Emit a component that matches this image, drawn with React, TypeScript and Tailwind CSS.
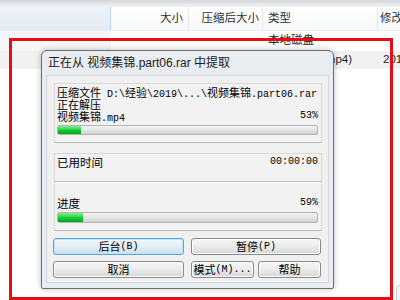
import React from "react";

const CJK = "font-['Noto_Sans_CJK_SC',sans-serif] text-[11px]";
const MONO = "font-['Liberation_Mono',monospace] text-[10px]";

function Mixed({ text }: { text: string }) {
  const parts = text.match(/[\u3000-\u9fff\uff00-\uffef]+|[^\u3000-\u9fff\uff00-\uffef]+/g) || [];
  return (
    <>
      {parts.map((p, i) =>
        /[\u3000-\u9fff\uff00-\uffef]/.test(p) ? (
          <span key={i} className={CJK}>
            {p}
          </span>
        ) : (
          <span key={i} className={MONO + " whitespace-pre"}>
            {p}
          </span>
        )
      )}
    </>
  );
}

function Bar({ fill, h }: { fill: number; h: string }) {
  return (
    <div
      className={
        "w-full rounded-[2px] border border-[#b4b4b4] bg-linear-to-b from-[#f4f4f4] via-[#e4e4e4] to-[#d2d2d2] overflow-hidden flex " +
        h
      }
    >
      <div
        className="h-full bg-linear-to-b from-[#7ef08f] via-[#0fcf33] to-[#06a422]"
        style={{ width: fill }}
      />
    </div>
  );
}

function Btn({
  label,
  w,
  primary,
}: {
  label: string;
  w: string;
  primary?: boolean;
}) {
  return (
    <div
      className={
        "h-[17px] shrink-0 rounded-[3px] border flex items-center justify-center leading-none text-black whitespace-nowrap overflow-visible " +
        w +
        (primary
          ? " border-[#5aa3d6] bg-linear-to-b from-[#f1f7fc] via-[#e3eef7] to-[#cfe0ee] shadow-[inset_0_0_0_1px_#bfe3fa]"
          : " border-[#8a8a8a] bg-linear-to-b from-[#f6f6f6] via-[#ebebeb] to-[#d6d6d6] shadow-[inset_0_0_0_1px_#fbfbfb]")
      }
    >
      <Mixed text={label} />
    </div>
  );
}

export default function App() {
  return (
    <div className="relative w-[400px] h-[300px] overflow-hidden bg-white font-['Liberation_Sans','Noto_Sans_CJK_SC',sans-serif]">
      {/* top strip */}
      <div className="h-[7px] bg-linear-to-b from-[#d3d6da] to-[#f3f4f5]" />
      {/* header */}
      <div className="h-[24px] flex text-[11.5px] text-[#2f2f2f] bg-linear-to-b from-[#ffffff] to-[#f7f8f9] border-b border-[#ececec]">
        <div className="w-[111px] shrink-0 border-r border-[#b9d5ef] bg-linear-to-b from-[#eef3f8] to-[#e3ebf3]" />
        <div className="w-[78px] shrink-0 border-r border-[#e3e5e8] flex items-center justify-end pr-[5px]">
          大小
        </div>
        <div className="w-[74px] shrink-0 border-r border-[#e3e5e8] flex items-center justify-end pr-[3px] whitespace-nowrap">
          压缩后大小
        </div>
        <div className="w-[115px] shrink-0 border-r border-[#e3e5e8] flex items-center pl-[5px]">
          类型
        </div>
        <div className="flex-1 min-w-0 overflow-hidden flex items-center pl-[2px] whitespace-nowrap">
          修改日期
        </div>
      </div>
      {/* rows */}
      <div className="h-[20px] flex text-[11.5px] text-[#222]">
        <div className="w-[111px] shrink-0 bg-[#f5f6f7]" />
        <div className="w-[152px] shrink-0" />
        <div className="w-[115px] shrink-0 flex items-center pl-[5px] whitespace-nowrap">
          本地磁盘
        </div>
      </div>
      <div className="h-[18px] flex text-[11.5px] text-[#222] bg-[#f1f1f1]">
        <div className="w-[263px] shrink-0" />
        <div className="w-[115px] shrink-0 flex items-center pl-[5px]">
          <div className="w-[84px] shrink-0 text-right whitespace-nowrap overflow-hidden flex justify-end">
            <span className="shrink-0">视频文件 (.mp4)</span>
          </div>
        </div>
        <div className="flex-1 min-w-0 overflow-hidden flex items-center pl-[5px] whitespace-nowrap">
          2019/3/18 10:21
        </div>
      </div>

      {/* scrollbar fragment */}
      <div className="absolute left-[396px] top-[285px] w-[8px] h-[20px] rounded-[3px] border border-[#cfcfcf] bg-[#f4f4f4]" />

      {/* dialog */}
      <div className="absolute left-[41px] top-[50px] w-[293px] h-[239px] rounded-t-[6px] rounded-b-[2px] border border-[#6d6d6d] bg-[#e9ecf0] flex flex-col shadow-[0_0_6px_rgba(0,0,0,0.25)]">
        <div className="h-[24px] shrink-0 flex items-center pl-[6px] text-[12px] text-[#1b1b1b] whitespace-nowrap">
          正在从 视频集锦.part06.rar 中提取
        </div>
        <div className="mx-[4px] h-[208px] bg-[#f0f0f0] border border-[#d4d7db] flex flex-col pl-[6px] pr-[6px] pt-[7px]">
          {/* section 1 */}
          <div className="ml-[1px] border border-[#d9d9d9] border-b-[#b9b9b9] bg-[#f2f2f2] pl-[2px] pr-[3px] pt-[2px] pb-[7px] flex flex-col">
            <div className="h-[12px] leading-[12px] whitespace-nowrap text-black">
              <Mixed text="压缩文件 D:\经验\2019\...\视频集锦.part06.rar" />
            </div>
            <div className="h-[12px] leading-[12px] whitespace-nowrap text-black">
              <Mixed text="正在解压" />
            </div>
            <div className="h-[12px] leading-[12px] whitespace-nowrap text-black flex justify-between">
              <div>
                <Mixed text="视频集锦.mp4" />
              </div>
              <div className={MONO}>53%</div>
            </div>
            <div className="mt-[3px]">
              <Bar fill={23} h="h-[10px]" />
            </div>
          </div>
          {/* section 2/3 */}
          <div className="ml-[1px] mt-[10px] border border-[#d9d9d9] border-b-[#b9b9b9] bg-[#f2f2f2] flex flex-col">
            <div className="pl-[2px] pr-[3px] pt-[2px] h-[28px] flex justify-between border-b border-[#bdbdbd]">
              <div className="h-[12px] leading-[12px] text-[11.5px] text-black font-['Noto_Sans_CJK_SC',sans-serif]">
                已用时间
              </div>
              <div className={MONO + " h-[12px] leading-[12px] text-black"}>00:00:00</div>
            </div>
            <div className="pl-[2px] pr-[3px] pt-[14px] pb-[7px] border-t border-[#fbfbfb] flex flex-col">
              <div className="h-[12px] leading-[12px] flex justify-between">
                <div className="text-[11.5px] text-black font-['Noto_Sans_CJK_SC',sans-serif]">进度</div>
                <div className={MONO + " text-black"}>59%</div>
              </div>
              <div className="mt-[3px]">
                <Bar fill={25} h="h-[11px]" />
              </div>
            </div>
          </div>
          {/* buttons */}
          <div className="mt-[7px] flex flex-col gap-[6px]">
            <div className="flex gap-[7px]">
              <Btn label="后台(B)" w="w-[131px]" primary />
              <Btn label="暂停(P)" w="w-[130px]" />
            </div>
            <div className="flex">
              <Btn label="取消" w="w-[131px]" />
              <div className="w-[7px] shrink-0" />
              <Btn label="模式(M)..." w="w-[63px]" />
              <div className="w-[4px] shrink-0" />
              <Btn label="帮助" w="w-[63px]" />
            </div>
          </div>
        </div>
      </div>

      {/* red annotation frame */}
      <div className="absolute left-[9px] top-[38px] w-[384px] h-[262px] border-[3px] border-[#e60d16]" />
    </div>
  );
}
